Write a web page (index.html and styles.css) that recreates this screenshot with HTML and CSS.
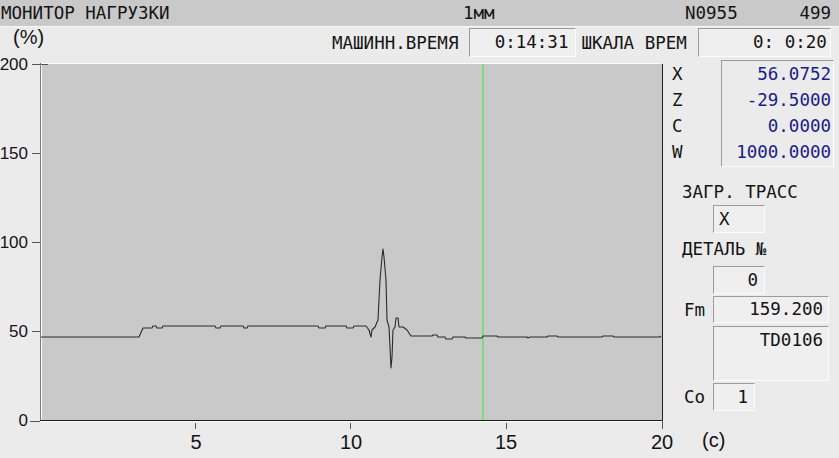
FILE: index.html
```html
<!DOCTYPE html>
<html lang="ru">
<head>
<meta charset="UTF-8">
<title>МОНИТОР НАГРУЗКИ</title>
<link rel="stylesheet" href="styles.css">
</head>
<body>
<header class="topbar">
  <span class="title">МОНИТОР НАГРУЗКИ</span>
  <span class="scale">1мм</span>
  <span class="prog">N0955</span>
  <span class="seq">499</span>
</header>

<div class="timerow">
  <span class="pct">(%)</span>
  <span class="label">МАШИНН.ВРЕМЯ</span>
  <span class="field run-time">0:14:31</span>
  <span class="label">ШКАЛА ВРЕМ</span>
  <span class="field time-scale">0: 0:20</span>
</div>

<main class="main">
  <svg class="chart" width="665" height="400" viewBox="0 58 665 400">
    <rect x="41" y="64" width="621" height="357" fill="#c9c9c9"/>
    <!-- frame -->
    <path d="M40.5 63 V421" stroke="#7c7c7c" fill="none"/>
    <path d="M41.5 421 V63.5 H661" stroke="#fbfbfb" fill="none"/>
    <path d="M41 64.5 H48" stroke="#555" fill="none"/>
    <path d="M40 420.5 H662.5 V64" stroke="#1e1e1e" fill="none"/>
    <path d="M40 421.5 H662" stroke="#fbfbfb" fill="none"/>
    <!-- y ticks -->
    <path d="M32 64.5 H40 M32 153.5 H40 M32 242.5 H40 M32 331.5 H40 M30 421.5 H40" stroke="#555" fill="none"/>
    <!-- x ticks -->
    <path d="M195.5 423 V429 M350.5 423 V429 M506.5 423 V429 M662.5 421 V429" stroke="#555" fill="none"/>
    <g class="ylabels" text-anchor="end">
      <text x="28" y="70">200</text>
      <text x="28" y="159">150</text>
      <text x="28" y="248">100</text>
      <text x="28" y="337">50</text>
      <text x="28" y="426">0</text>
    </g>
    <g class="xlabels" text-anchor="middle">
      <text x="196" y="449">5</text>
      <text x="351" y="449">10</text>
      <text x="506" y="449">15</text>
      <text x="662" y="449">20</text>
    </g>
    <!-- cursor -->
    <line x1="483" y1="64" x2="483" y2="420" stroke="#80da80" stroke-width="2"/>
    <!-- load trace -->
    <path fill="none" stroke="#2a2a2a" stroke-width="1.1" stroke-linejoin="round"
      d="M41 337 L139 337 L143 328 L152 328 L153 326 L156 326 L157 328 L162 328 L163 326
         L215 326 L216 328 L220 328 L221 326 L243 326 L244 328 L247 328 L248 326
         L318 326 L319 328 L325 328 L326 326 L346 326 L347 328 L353 328 L354 326
         L366 326 L369 330 L371 337 L372 330 L375 327 L378 320 L380 280 L382 257
         L383 249 L384 257 L386 280 L387 320 L389 327 L391 368 L392 357 L393 330
         L395 327 L396 318 L398 318 L399 327 L403 327 L407 330 L411 336 L432 336
         L433 335 L437 335 L438 337 L445 337 L446 339 L452 339 L453 337 L465 337
         L466 338 L482 338 L483 336 L497 336 L498 337 L527 337 L528 338 L530 337
         L547 337 L548 336 L557 336 L558 337 L602 337 L603 336 L613 336 L614 337
         L660 337 L661 336"/>
  </svg>

  <aside class="side">
    <div class="axes">
      <div class="axis-names">
        <div>X</div>
        <div>Z</div>
        <div>C</div>
        <div>W</div>
      </div>
      <div class="axis-values">
        <div>56.0752</div>
        <div>-29.5000</div>
        <div>0.0000</div>
        <div>1000.0000</div>
      </div>
    </div>

    <div class="caption trace-title">ЗАГР. ТРАСС</div>
    <div class="field small trace-axis">X</div>

    <div class="caption part-title">ДЕТАЛЬ №</div>
    <div class="field small part-no">0</div>

    <div class="row fm-row">
      <span class="row-label">Fm</span>
      <span class="field wide">159.200</span>
    </div>
    <div class="field wide tool">TD0106</div>

    <div class="row co-row">
      <span class="row-label">Co</span>
      <span class="field tiny">1</span>
    </div>

    <div class="unit">(c)</div>
  </aside>
</main>
</body>
</html>
```

FILE: styles.css
```css
body {
  margin: 0;
  width: 839px;
  height: 458px;
  overflow: hidden;
  background: #ebebeb;
  color: #141414;
  font-family: "DejaVu Sans Mono", monospace;
  font-size: 17.5px;
}

.topbar {
  display: flex;
  height: 26px;
  line-height: 26px;
  background: #c9c9c9;
  border-bottom: 1px solid #f7f7f7;
  white-space: pre;
}
.title {
  width: 462px;
  padding-left: 1px;
}
.scale {
  width: 222px;
}
.seq {
  margin-left: auto;
  padding-right: 8px;
}

.timerow {
  display: flex;
  align-items: center;
  height: 31px;
  white-space: pre;
}
.pct {
  align-self: flex-start;
  width: 332px;
  box-sizing: border-box;
  padding-left: 13px;
  font-family: "Liberation Sans", sans-serif;
  font-size: 20px;
  line-height: 20px;
}

.field {
  box-sizing: border-box;
  background: #efefef;
  border: 1px solid;
  border-color: #9c9c9c #fdfdfd #fdfdfd #9c9c9c;
  text-align: right;
  white-space: pre;
}
.run-time {
  width: 107px;
  height: 29px;
  line-height: 27px;
  margin: 0 5px 0 11px;
  padding-right: 7px;
}
.time-scale {
  width: 133px;
  height: 29px;
  line-height: 27px;
  margin-left: 11px;
  padding-right: 3px;
}

.main {
  display: flex;
}
.chart {
  display: block;
  flex: none;
  overflow: visible;
}
.ylabels {
  font-family: "Liberation Sans", sans-serif;
  font-size: 17px;
  fill: #141414;
}
.xlabels {
  font-family: "Liberation Sans", sans-serif;
  font-size: 20px;
  fill: #141414;
}

.side {
  width: 174px;
}
.axes {
  display: flex;
  margin-top: 2px;
}
.axis-names {
  width: 56px;
  box-sizing: border-box;
  padding: 1px 0 0 7px;
  line-height: 26px;
}
.axis-values {
  width: 113px;
  box-sizing: border-box;
  padding: 0 2px 1px 0;
  line-height: 26px;
  text-align: right;
  color: #1c1c86;
  border: 1px solid;
  border-color: #9c9c9c #fdfdfd #fdfdfd #9c9c9c;
}

.caption {
  padding-left: 17px;
  line-height: 24px;
}
.trace-title {
  margin-top: 13px;
}
.part-title {
  margin-top: 4px;
}
.small {
  width: 52px;
  height: 28px;
  line-height: 26px;
  margin-left: 48px;
}
.trace-axis {
  margin-top: 1px;
  text-align: left;
  padding-left: 5px;
}
.part-no {
  margin-top: 5px;
  padding-right: 6px;
}

.row {
  display: flex;
  align-items: center;
}
.row-label {
  width: 48px;
  box-sizing: border-box;
  padding-left: 19px;
}
.wide {
  width: 116px;
  padding-right: 5px;
}
.fm-row {
  margin-top: 2px;
}
.fm-row .wide {
  height: 27px;
  line-height: 25px;
}
.tool {
  height: 55px;
  margin: 3px 0 0 48px;
  line-height: 22px;
  padding-top: 2px;
}
.co-row {
  margin-top: 2px;
}
.tiny {
  width: 42px;
  height: 28px;
  line-height: 26px;
  padding-right: 6px;
}

.unit {
  margin-top: 17px;
  padding-left: 37px;
  line-height: 24px;
  font-family: "Liberation Sans", sans-serif;
  font-size: 20px;
}
```
